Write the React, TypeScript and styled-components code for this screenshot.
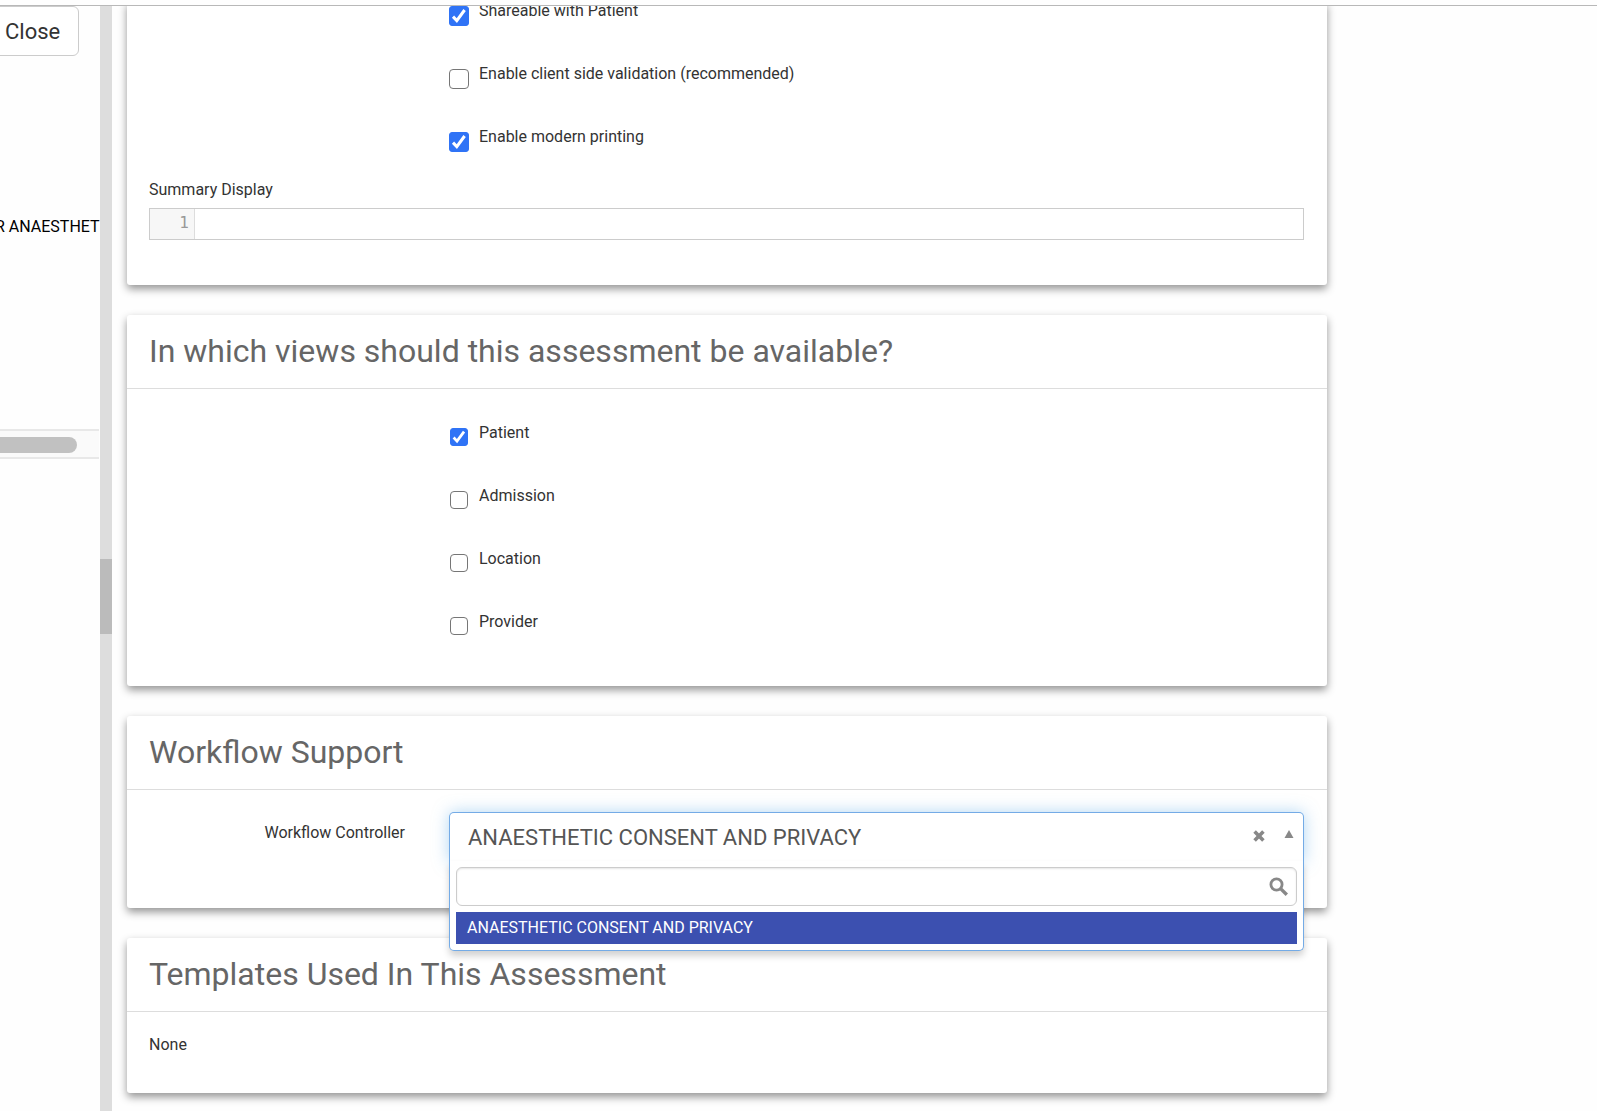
import React, { useState } from "react";
import styled, { createGlobalStyle, css } from "styled-components";

const ink = "#333";
const line = "#ccc";
const blue = "#2f73f6";

const GlobalStyle = createGlobalStyle`
  *, *::before, *::after { box-sizing: border-box; }
  body {
    margin: 0;
    background: #fefefe;
    color: ${ink};
    font: 16px/20px Roboto, "Liberation Sans", sans-serif;
  }
  button, input, textarea { font: inherit; color: inherit; }
`;

const Shell = styled.div`
  display: flex;
  flex-direction: column;
  height: 100vh;
`;

const TopBar = styled.header`
  flex: none;
  height: 6px;
  border-bottom: 1px solid #b8b8b8;
`;

const Panes = styled.div`
  display: flex;
  flex: 1;
  min-height: 0;
`;

const SidePane = styled.aside`
  flex: none;
  width: 100px;
  overflow: hidden;
  white-space: nowrap;
`;

const CloseButton = styled.button`
  display: block;
  height: 50px;
  margin-left: -16px;
  padding: 2px 18px 0 20px;
  border: 1px solid ${line};
  border-radius: 6px;
  background: #fff;
  font-size: 22px;
  line-height: 24px;
`;

const SideItem = styled.div`
  margin: 161px 0 192px -5px;
  color: #000;
`;

const ScrollTrack = styled.div`
  margin-right: 1px;
  padding: 6px 0 4px;
  border: solid #e8e8e8;
  border-width: 2px 0;
  background: #fafafa;
`;

const ScrollThumb = styled.div`
  width: 77px;
  height: 16px;
  border-radius: 0 8px 8px 0;
  background: #c1c1c1;
`;

const Splitter = styled.div`
  flex: none;
  display: grid;
  grid-template-rows: 1fr 1fr;
  width: 12px;
  background: #ddd;
`;

const SplitterGrip = styled.div`
  grid-row: 2;
  height: 75px;
  background: #bbb;
`;

const Main = styled.main`
  flex: 1;
  min-width: 0;
  overflow: auto;
  padding: 0 15px;
`;

const Stack = styled.div`
  display: flex;
  flex-direction: column;
  gap: 30px;
  max-width: 1200px;
  margin-top: -5px;
`;

const Card = styled.section`
  border-radius: 3px;
  background: #fff;
  box-shadow: 0 4px 9px rgba(0, 0, 0, 0.42);
`;

const CardTitle = styled.h2`
  margin: 0;
  padding: 18px 22px 19px;
  border-bottom: 1px solid #ddd;
  color: #666;
  font-size: 32px;
  font-weight: 400;
  line-height: 36px;
`;

const CardBody = styled.div<{ $top: number; $bottom: number }>`
  padding: ${p => p.$top}px 23px ${p => p.$bottom}px 22px;
`;

const CheckList = styled.div`
  display: flex;
  flex-direction: column;
  align-items: flex-start;
  gap: 38px;
  padding-left: 300px;
`;

const CheckLabel = styled.label`
  display: flex;
  align-items: flex-start;
  gap: 10px;
  height: 25px;
`;

const CheckBox = styled.span<{ $size: number }>`
  position: relative;
  display: block;
  width: 20px;
  margin-top: 5px;

  input {
    appearance: none;
    display: block;
    width: ${p => p.$size}px;
    height: ${p => p.$size}px;
    margin: 0 auto;
    border: 1px solid #767676;
    border-radius: 4px;
    background: #fff;
  }
  input:checked {
    border-color: ${blue};
    border-radius: 3px;
    background: ${blue};
  }
  svg {
    position: absolute;
    inset: 0;
    width: ${p => p.$size}px;
    height: ${p => p.$size}px;
    margin: 0 auto;
    pointer-events: none;
  }
  input:not(:checked) + svg { display: none; }
`;

const FieldLabel = styled.label`
  display: block;
  margin: 28px 0 8px;
`;

const Editor = styled.div`
  display: flex;
  height: 32px;
  border: 1px solid ${line};
`;

const Gutter = styled.div`
  width: 45px;
  padding: 4px 5px 0 0;
  border-right: 1px solid #ddd;
  background: #f7f7f7;
  color: #999;
  font-family: "DejaVu Sans Mono", monospace;
  text-align: right;
`;

const EditorText = styled.textarea`
  flex: 1;
  padding: 4px;
  border: 0;
  outline: 0;
  background: none;
  resize: none;
`;

const FormRow = styled.div`
  display: flex;
  gap: 44px;

  > label {
    flex: none;
    width: 256px;
    padding-top: 11px;
    text-align: right;
  }
`;

const Picker = styled.div`
  position: relative;
  flex: 1;
  min-width: 0;
`;

const edge = "#74abe6";

const PickerControl = styled.div<{ $open: boolean }>`
  display: flex;
  align-items: flex-start;
  height: 50px;
  border: 1px solid ${edge};
  border-radius: 5px;
  background: #fff;
  ${p => p.$open && css`
    border-bottom-color: transparent;
    border-radius: 5px 5px 0 0;
    box-shadow: 0 0 16px rgba(102, 175, 233, 0.5);
  `}
`;

const PickerValue = styled.button`
  flex: 1;
  min-width: 0;
  height: 48px;
  padding: 2px 18px 0;
  border: 0;
  background: none;
  color: #555;
  font-size: 22px;
  line-height: 24px;
  text-align: left;
`;

const IconButton = styled.button`
  display: flex;
  align-items: center;
  justify-content: center;
  width: 32px;
  height: 46px;
  padding: 0;
  border: 0;
  background: none;
`;

const ArrowButton = styled(IconButton)`
  width: 28px;
  height: 42px;
`;

const Menu = styled.div`
  position: absolute;
  z-index: 2;
  top: 49px;
  left: 0;
  right: 0;
  padding: 6px;
  border: 1px solid ${edge};
  border-top: 0;
  border-radius: 0 0 5px 5px;
  background: #fff;
  box-shadow: 0 5px 7px rgba(0, 0, 0, 0.18);
`;

const SearchField = styled.div`
  display: flex;
  align-items: center;
  height: 39px;
  margin-bottom: 6px;
  padding-right: 7px;
  border: 1px solid ${line};
  border-radius: 6px;
  box-shadow: inset 0 1px 2px rgba(0, 0, 0, 0.1);

  input {
    flex: 1;
    height: 100%;
    padding: 0 10px;
    border: 0;
    outline: 0;
    background: none;
  }
`;

const Options = styled.ul`
  margin: 0;
  padding: 0;
  list-style: none;
`;

const Option = styled.li`
  padding: 6px 11px;
  background: #3c50b0;
  color: #fff;
`;

function Check({ text, checked = false, size }: { text: string; checked?: boolean; size: number }) {
  return (
    <CheckLabel>
      <CheckBox $size={size}>
        <input type="checkbox" defaultChecked={checked} />
        <svg viewBox="0 0 20 20" aria-hidden="true">
          <path d="M4 10.6 L7.8 14.6 L15.6 4" fill="none" stroke="#fff" strokeWidth="3" />
        </svg>
      </CheckBox>
      {text}
    </CheckLabel>
  );
}

function WorkflowPicker() {
  const [open, setOpen] = useState(true);
  const choice = "ANAESTHETIC CONSENT AND PRIVACY";
  return (
    <Picker>
      <PickerControl $open={open}>
        <PickerValue
          id="workflow"
          type="button"
          aria-haspopup="listbox"
          aria-expanded={open}
          onClick={() => setOpen(!open)}
        >
          {choice}
        </PickerValue>
        <IconButton type="button" aria-label="Clear">
          <svg width="12" height="12" viewBox="0 0 12 12">
            <path d="M1.6 1.6 L10.4 10.4 M10.4 1.6 L1.6 10.4" stroke="#888" strokeWidth="3.6" />
          </svg>
        </IconButton>
        <ArrowButton type="button" aria-label="Toggle list" onClick={() => setOpen(!open)}>
          <svg width="10" height="8" viewBox="0 0 10 8">
            <path d="M5 0 L9.5 8 H0.5 Z" fill="#888" />
          </svg>
        </ArrowButton>
      </PickerControl>
      {open && (
        <Menu>
          <SearchField>
            <input type="text" aria-label="Search workflow controllers" />
            <svg width="20" height="20" viewBox="0 0 20 20" aria-hidden="true">
              <circle cx="7.5" cy="7.5" r="5.6" fill="none" stroke="#888" strokeWidth="2.8" />
              <path d="M11.6 11.6 L17.8 17.8" stroke="#888" strokeWidth="3.4" />
            </svg>
          </SearchField>
          <Options role="listbox" aria-label="Workflow controllers">
            <Option role="option" aria-selected="true">{choice}</Option>
          </Options>
        </Menu>
      )}
    </Picker>
  );
}

export default function App() {
  return (
    <Shell>
      <GlobalStyle />
      <TopBar />
      <Panes>
        <SidePane>
          <CloseButton type="button">Close</CloseButton>
          <SideItem>R ANAESTHET</SideItem>
          <ScrollTrack>
            <ScrollThumb />
          </ScrollTrack>
        </SidePane>
        <Splitter>
          <SplitterGrip />
        </Splitter>
        <Main>
          <Stack>
            <Card>
              <CardBody $top={0} $bottom={45}>
                <CheckList>
                  <Check size={20} text="Shareable with Patient" checked />
                  <Check size={20} text="Enable client side validation (recommended)" />
                  <Check size={20} text="Enable modern printing" checked />
                </CheckList>
                <FieldLabel htmlFor="summary">Summary Display</FieldLabel>
                <Editor>
                  <Gutter>1</Gutter>
                  <EditorText id="summary" rows={1} />
                </Editor>
              </CardBody>
            </Card>
            <Card>
              <CardTitle>In which views should this assessment be available?</CardTitle>
              <CardBody $top={34} $bottom={49}>
                <CheckList>
                  <Check size={18} text="Patient" checked />
                  <Check size={18} text="Admission" />
                  <Check size={18} text="Location" />
                  <Check size={18} text="Provider" />
                </CheckList>
              </CardBody>
            </Card>
            <Card>
              <CardTitle>Workflow Support</CardTitle>
              <CardBody $top={22} $bottom={46}>
                <FormRow>
                  <label htmlFor="workflow">Workflow Controller</label>
                  <WorkflowPicker />
                </FormRow>
              </CardBody>
            </Card>
            <Card>
              <CardTitle>Templates Used In This Assessment</CardTitle>
              <CardBody $top={23} $bottom={38}>None</CardBody>
            </Card>
          </Stack>
        </Main>
      </Panes>
    </Shell>
  );
}
